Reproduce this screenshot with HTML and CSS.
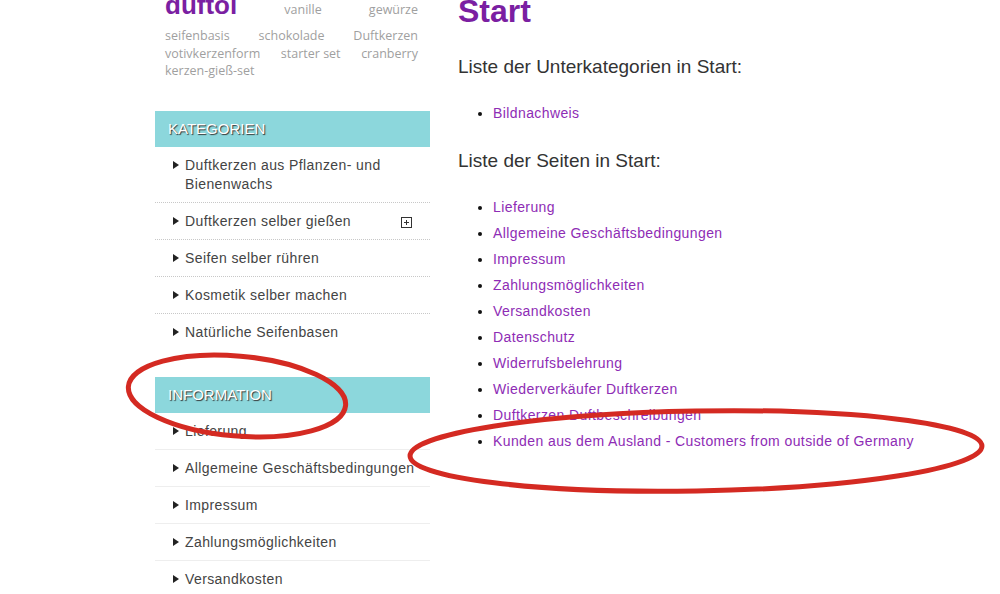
FILE: index.html
```html
<!doctype html>
<html>
<head>
<meta charset="utf-8">
<link rel="stylesheet" href="styles.css">
<title>Start</title>
</head>
<body>
<div class="page">
  <div class="sidebar">
    <div class="tags">
      <div class="tag-row first"><a class="tag-big">duftöl</a> <a>vanille</a> <a>gewürze</a></div>
      <div class="tag-row"><a>seifenbasis</a> <a>schokolade</a> <a>Duftkerzen</a></div>
      <div class="tag-row"><a>votivkerzenform</a> <a>starter set</a> <a>cranberry</a></div>
      <div class="tag-row last"><a>kerzen-gieß-set</a></div>
    </div>

    <div class="box">
      <h3 class="box-title">Kategorien</h3>
      <ul class="menu dotted">
        <li>Duftkerzen aus Pflanzen- und Bienenwachs</li>
        <li class="has-sub">Duftkerzen selber gießen <span class="plus"></span></li>
        <li>Seifen selber rühren</li>
        <li>Kosmetik selber machen</li>
        <li>Natürliche Seifenbasen</li>
      </ul>
    </div>

    <div class="box">
      <h3 class="box-title">Information</h3>
      <ul class="menu">
        <li>Lieferung</li>
        <li>Allgemeine Geschäftsbedingungen</li>
        <li>Impressum</li>
        <li>Zahlungsmöglichkeiten</li>
        <li>Versandkosten</li>
      </ul>
    </div>
  </div>

  <div class="main">
    <h1>Start</h1>
    <p class="lead">Liste der Unterkategorien in Start:</p>
    <ul class="links">
      <li><a>Bildnachweis</a></li>
    </ul>
    <p class="lead">Liste der Seiten in Start:</p>
    <ul class="links">
      <li><a>Lieferung</a></li>
      <li><a>Allgemeine Geschäftsbedingungen</a></li>
      <li><a>Impressum</a></li>
      <li><a>Zahlungsmöglichkeiten</a></li>
      <li><a>Versandkosten</a></li>
      <li><a>Datenschutz</a></li>
      <li><a>Widerrufsbelehrung</a></li>
      <li><a>Wiederverkäufer Duftkerzen</a></li>
      <li><a>Duftkerzen Duftbeschreibungen</a></li>
      <li><a>Kunden aus dem Ausland - Customers from outside of Germany</a></li>
    </ul>
  </div>
</div>

<svg class="marks" width="1000" height="594" viewBox="0 0 1000 594">
  <ellipse cx="237" cy="396" rx="109" ry="40" transform="rotate(5 237 396)" />
  <ellipse cx="696" cy="451" rx="286" ry="40" transform="rotate(-1 696 451)" />
</svg>
</body>
</html>
```

FILE: styles.css
```css
body {
    margin: 0;
    background-color: white;
    font-family: "Liberation Sans", Arial, sans-serif;
    color: #444;
    overflow: hidden;
}
h1, h3, p, ul {
    margin: 0;
    padding: 0;
}
.page {
    display: flex;
    padding-left: 155px;
}
.sidebar {
    width: 275px;
    flex-shrink: 0;
}

/* tag cloud */
.tags {
    padding: 0 12px 0 10px;
    font-family: "Open Sans", sans-serif;
    font-size: 12.5px;
    line-height: 17.5px;
    color: #9f9f9f;
}
.tag-row {
    display: flex;
    justify-content: space-between;
    align-items: baseline;
    white-space: nowrap;
}
.tag-row.first {
    height: 26px;
    margin-top: -8px;
    margin-bottom: 9px;
}
.tag-row.last {
    justify-content: flex-start;
}
.tags a {
    color: #9f9f9f;
}
.tags .tag-big {
    font-family: "Liberation Sans", Arial, sans-serif;
    font-size: 26px;
    line-height: 26px;
    font-weight: bold;
    color: #7b1fa2;
}

/* boxes */
.box {
    margin-top: 31px;
}
.box + .box {
    margin-top: 27px;
}
.box-title {
    height: 36px;
    line-height: 36px;
    padding-left: 13px;
    background-color: #8cd7dc;
    color: white;
    font-size: 15px;
    font-weight: normal;
    text-transform: uppercase;
    text-shadow: 1px 1px 1px #333;
}
.menu {
    list-style: none;
}
.menu li {
    position: relative;
    padding: 9px 8px 8px 30px;
    font-size: 14px;
    letter-spacing: 0.4px;
    line-height: 19px;
    color: #444;
    white-space: nowrap;
    border-bottom: 1px solid #eee;
}
.menu.dotted li {
    white-space: normal;
    padding-right: 40px;
    border-bottom: 1px dotted #c8c8c8;
}
.menu.dotted li:last-child {
    border-bottom: 0;
}
.menu li::before {
    content: "";
    position: absolute;
    left: 18px;
    top: 14px;
    border-left: 6px solid #222;
    border-top: 4px solid transparent;
    border-bottom: 4px solid transparent;
}
.plus {
    position: absolute;
    right: 18px;
    top: 14px;
    width: 9px;
    height: 9px;
    border: 1px solid #333;
}
.plus::before,
.plus::after {
    content: "";
    position: absolute;
    background-color: #333;
}
.plus::before {
    left: 2px;
    top: 4px;
    width: 5px;
    height: 1px;
}
.plus::after {
    left: 4px;
    top: 2px;
    width: 1px;
    height: 5px;
}

/* main column */
.main {
    margin-left: 28px;
    margin-top: -7px;
}
.main h1 {
    font-size: 32px;
    line-height: 36px;
    color: #7b1fa2;
    font-weight: bold;
}
.lead {
    margin-top: 27px;
    font-size: 19px;
    line-height: 22px;
    color: #333;
}
.links + .lead {
    margin-top: 24px;
}
.links {
    margin: 22px 0 0 35px;
    list-style: disc;
    font-size: 14px;
    letter-spacing: 0.4px;
    line-height: 26px;
    color: #111;
}
.links a {
    color: #8e2cb5;
}

.marks {
    position: absolute;
    left: 0;
    top: 0;
    pointer-events: none;
}
.marks ellipse {
    fill: none;
    stroke: #d42a22;
    stroke-width: 5;
}
```
